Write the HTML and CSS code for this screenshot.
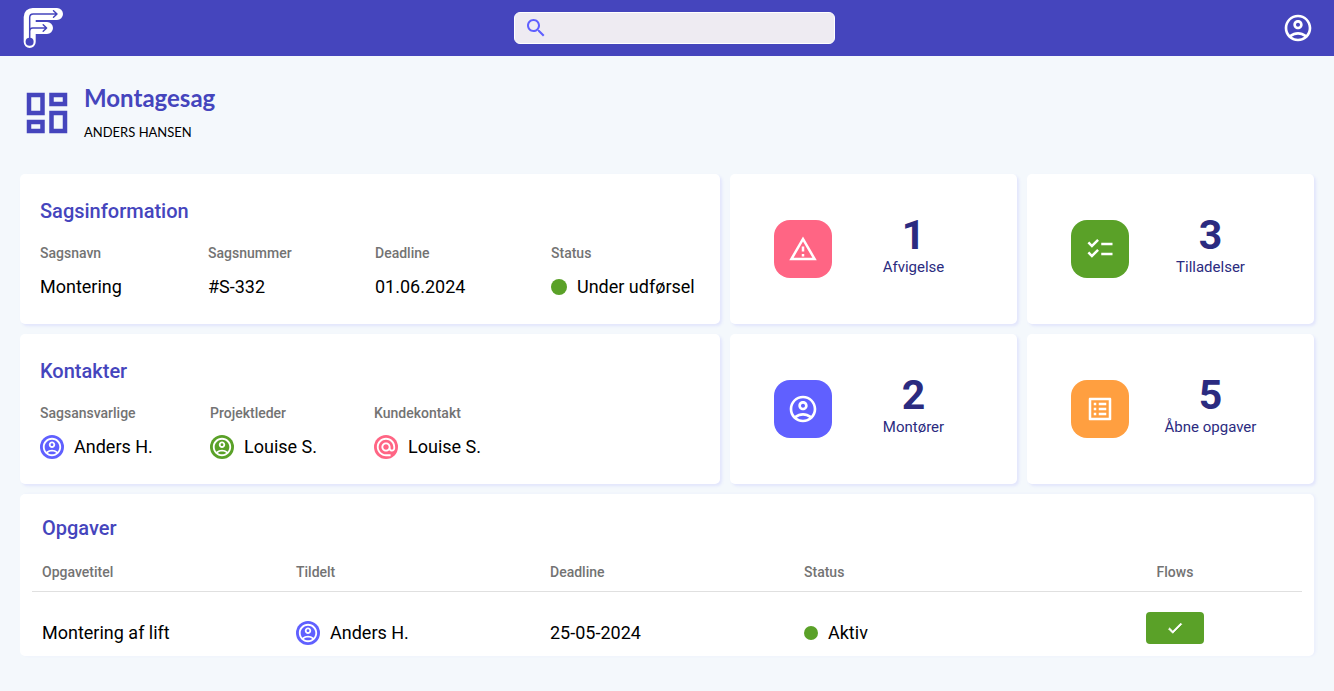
FILE: index.html
```html
<!DOCTYPE html>
<html lang="da">
<head>
<meta charset="utf-8">
<meta name="viewport" content="width=device-width, initial-scale=1">
<title>Montagesag</title>
<link rel="stylesheet" href="styles.css">
</head>
<body>
<svg class="sprite" aria-hidden="true">
  <symbol id="account" viewBox="0 0 24 24"><path d="M12 2C6.48 2 2 6.48 2 12s4.48 10 10 10 10-4.48 10-10S17.52 2 12 2zM7.35 18.5C8.66 17.56 10.26 17 12 17s3.34.56 4.65 1.5C15.34 19.44 13.74 20 12 20s-3.34-.56-4.65-1.5zm10.79-1.38C16.45 15.8 14.32 15 12 15s-4.45.8-6.14 2.12C4.7 15.73 4 13.95 4 12c0-4.42 3.58-8 8-8s8 3.58 8 8c0 1.95-.7 3.73-1.86 5.12zM12 6c-1.93 0-3.5 1.57-3.5 3.5S10.07 13 12 13s3.5-1.57 3.5-3.5S13.93 6 12 6zm0 5c-.83 0-1.5-.67-1.5-1.5S11.17 8 12 8s1.5.67 1.5 1.5S12.83 11 12 11z"/></symbol>
  <symbol id="email" viewBox="0 0 24 24"><path d="M12 2C6.48 2 2 6.48 2 12s4.48 10 10 10h5v-2h-5c-4.34 0-8-3.66-8-8s3.66-8 8-8 8 3.66 8 8v1.43c0 .79-.71 1.57-1.5 1.57s-1.5-.78-1.5-1.57V12c0-2.76-2.24-5-5-5s-5 2.24-5 5 2.24 5 5 5c1.38 0 2.64-.56 3.54-1.47.65.89 1.77 1.47 2.96 1.47 1.97 0 3.5-1.6 3.5-3.57V12c0-5.52-4.48-10-10-10zm0 13c-1.66 0-3-1.34-3-3s1.34-3 3-3 3 1.34 3 3-1.34 3-3 3z"/></symbol>
</svg>

<header class="topbar">
  <a class="logo" href="#" aria-label="Forside">
    <svg viewBox="20 4 47 48" fill="none" stroke-linecap="round" stroke-linejoin="round">
      <path class="logo-body" d="M29.7 42V17q0-3 3-3H57M30 28h17"/>
      <path class="logo-line" d="M29.7 42V17.5q0-3.5 3.500-3.500H57M29.7 31q0-3 3-3H46.500M53.500 10.700 57 14l-3.500 3.300M43.200 24.700l3.400 3.300-3.400 3.300"/>
      <circle class="logo-node" cx="29.6" cy="41.8" r="4"/>
    </svg>
  </a>
  <label class="search">
    <svg viewBox="0 0 24 24" aria-hidden="true"><path d="M15.500 14h-.79l-.28-.27C15.410 12.590 16 11.110 16 9.500 16 5.910 13.090 3 9.500 3S3 5.910 3 9.500 5.910 16 9.500 16c1.610 0 3.090-.59 4.230-1.570l.27.28v.79l5 4.990L20.490 19l-4.990-5zm-6 0C7.010 14 5 11.990 5 9.500S7.010 5 9.500 5 14 7.010 14 9.500 11.990 14 9.500 14z"/></svg>
    <input type="search" aria-label="Søg">
  </label>
  <button class="profile" type="button" aria-label="Profil"><svg><use href="#account"/></svg></button>
</header>

<main class="page">
  <div class="heading">
    <svg class="heading-icon" viewBox="0 0 24 24" aria-hidden="true"><path d="M19 5v2h-4V5h4M9 5v6H5V5h4m10 8v6h-4v-6h4M9 17v2H5v-2h4M21 3h-8v6h8V3zM11 3H3v10h8V3zm10 8h-8v10h8V11zm-10 4H3v6h8v-6z"/></svg>
    <div>
      <h1 class="heading-title">Montagesag</h1>
      <p class="heading-sub">ANDERS HANSEN</p>
    </div>
  </div>

  <div class="cards">
    <section class="card info">
      <h2 class="card-title">Sagsinformation</h2>
      <dl class="fields case-fields">
        <div><dt>Sagsnavn</dt><dd>Montering</dd></div>
        <div><dt>Sagsnummer</dt><dd>#S-332</dd></div>
        <div><dt>Deadline</dt><dd>01.06.2024</dd></div>
        <div><dt>Status</dt><dd><span class="dot"></span>Under udførsel</dd></div>
      </dl>
    </section>
    <section class="card stat">
      <span class="tile pink"><svg viewBox="0 0 24 24"><path d="M12 5.990 19.530 19H4.470L12 5.990M12 2 1 21h22L12 2zm1 14h-2v2h2v-2zm0-6h-2v4h2v-4z"/></svg></span>
      <p class="stat-text"><strong>1</strong>Afvigelse</p>
    </section>
    <section class="card stat">
      <span class="tile green"><svg viewBox="0 0 24 24"><path d="M22 7h-9v2h9V7zm0 8h-9v2h9v-2zM5.540 11 2 7.460l1.410-1.410 2.120 2.120 4.240-4.240 1.410 1.410L5.540 11zm0 8L2 15.460l1.410-1.410 2.120 2.120 4.240-4.240 1.410 1.410L5.540 19z"/></svg></span>
      <p class="stat-text"><strong>3</strong>Tilladelser</p>
    </section>

    <section class="card info">
      <h2 class="card-title">Kontakter</h2>
      <dl class="fields contact-fields">
        <div><dt>Sagsansvarlige</dt><dd><span class="avatar violet"><svg><use href="#account"/></svg></span>Anders H.</dd></div>
        <div><dt>Projektleder</dt><dd><span class="avatar green"><svg><use href="#account"/></svg></span>Louise S.</dd></div>
        <div><dt>Kundekontakt</dt><dd><span class="avatar pink"><svg><use href="#email"/></svg></span>Louise S.</dd></div>
      </dl>
    </section>
    <section class="card stat">
      <span class="tile violet"><svg class="large"><use href="#account"/></svg></span>
      <p class="stat-text"><strong>2</strong>Montører</p>
    </section>
    <section class="card stat">
      <span class="tile orange"><svg viewBox="0 0 24 24"><path d="M19 5v14H5V5h14m1.100-2H3.900c-.5 0-.9.4-.9.9v16.200c0 .4.4.9.9.9h16.200c.4 0 .9-.5.9-.9V3.900c0-.5-.5-.9-.9-.9zM11 7h6v2h-6V7zm0 4h6v2h-6v-2zm0 4h6v2h-6zM7 7h2v2H7zm0 4h2v2H7zm0 4h2v2H7z"/></svg></span>
      <p class="stat-text"><strong>5</strong>Åbne opgaver</p>
    </section>

    <section class="card tasks">
      <h2 class="card-title" id="tasks-title">Opgaver</h2>
      <table class="task-table" aria-labelledby="tasks-title">
        <thead>
          <tr><th>Opgavetitel</th><th>Tildelt</th><th>Deadline</th><th>Status</th><th class="flow">Flows</th></tr>
        </thead>
        <tbody>
          <tr>
            <td>Montering af lift</td>
            <td><span class="entry"><span class="avatar violet"><svg><use href="#account"/></svg></span>Anders H.</span></td>
            <td>25-05-2024</td>
            <td><span class="entry"><span class="dot small"></span>Aktiv</span></td>
            <td class="flow"><button class="flow-button" type="button" aria-label="Godkend"><svg viewBox="0 0 24 24"><path d="M9 16.170 4.830 12l-1.420 1.410L9 19 21 7l-1.410-1.410z"/></svg></button></td>
          </tr>
        </tbody>
      </table>
    </section>
  </div>
</main>
</body>
</html>
```

FILE: styles.css
```css
* { box-sizing: border-box; }

body {
  margin: 0;
  background: #f4f8fc;
  color: #000;
  font-family: Roboto, "Liberation Sans", sans-serif;
  font-size: 18px;
}

h1, h2, p, dl, dd { margin: 0; }
svg { display: block; fill: currentColor; }
.sprite { display: none; }

.topbar {
  display: flex;
  align-items: center;
  justify-content: space-between;
  height: 56px;
  padding: 0 20px;
  background: #4545bd;
  color: #fff;
}
.logo svg { width: 47px; height: 48px; fill: none; }
.logo-body { stroke: #fff; stroke-width: 12; }
.logo-line { stroke: #4545bd; stroke-width: 1.5; }
.logo-node { fill: #4545bd; }

.search {
  display: flex;
  align-items: center;
  gap: 8px;
  width: 321px;
  height: 32px;
  padding: 0 9px;
  border: 1px solid #fff;
  border-radius: 6px;
  background: #eeebf2;
  color: #6060ff;
}
.search svg { flex: none; width: 24px; height: 24px; }
.search input {
  flex: 1;
  min-width: 0;
  border: 0;
  outline: 0;
  background: transparent;
  font: inherit;
  font-size: 16px;
}

.profile { padding: 0; border: 0; background: none; color: inherit; cursor: pointer; }
.profile svg { width: 32px; height: 32px; }

.page { padding: 28px 20px 34px; }

.heading {
  display: flex;
  align-items: center;
  gap: 10px;
  margin-bottom: 32px;
  font-family: Lato, "Liberation Sans", sans-serif;
}
.heading-icon { width: 54px; height: 54px; color: #4545bd; }
.heading-title { color: #4545bd; font-size: 24px; line-height: 28px; font-weight: 700; }
.heading-sub { margin-top: 10px; font-size: 13px; line-height: 20px; }

.cards {
  display: grid;
  grid-template-columns: 700fr 287fr 287fr;
  gap: 10px;
}
.card {
  border-radius: 5px;
  background: #fff;
  box-shadow: 2px 2px 3px rgba(96, 96, 255, 0.12);
}
.card-title { color: #4545bd; font-size: 20px; line-height: 24px; font-weight: 500; }

.info { min-height: 150px; padding: 25px 20px; }
.fields { display: grid; margin-top: 20px; }
.case-fields { grid-template-columns: 168fr 167fr 176fr 149fr; }
.contact-fields { grid-template-columns: 170fr 164fr 326fr; }
dt, th { color: #737373; font-size: 14px; line-height: 20px; font-weight: 500; }
dd {
  display: flex;
  align-items: center;
  gap: 10px;
  margin-top: 12px;
  line-height: 24px;
  white-space: nowrap;
}

.dot { flex: none; width: 16px; height: 16px; border-radius: 50%; background: #5aa128; }
.dot.small { width: 14px; height: 14px; }

.avatar {
  display: grid;
  flex: none;
  place-items: center;
  width: 24px;
  height: 24px;
  border-radius: 50%;
  color: #fff;
}
.avatar svg { width: 22px; height: 22px; }

.stat { display: flex; align-items: center; justify-content: center; gap: 22px; }
.tile {
  display: grid;
  flex: none;
  place-items: center;
  width: 58px;
  height: 58px;
  border-radius: 16px;
  color: #fff;
}
.tile svg { width: 30px; height: 30px; }
.tile .large { width: 32px; height: 32px; }
.stat-text { width: 120px; padding-bottom: 8px; color: #2b2b80; font-size: 15px; line-height: 20px; text-align: center; }
.stat-text strong { display: block; font-size: 41px; line-height: 44px; font-weight: 700; }

.pink { background: #ff6584; }
.green { background: #5aa128; }
.violet { background: #6060ff; }
.orange { background: #ff9f40; }

.tasks { grid-column: 1 / -1; padding: 22px 12px 0; box-shadow: 2px 0 3px rgba(96, 96, 255, 0.06); }
.tasks .card-title { padding-left: 10px; }
.task-table { width: 100%; margin-top: 22px; border-collapse: separate; border-spacing: 0; table-layout: fixed; }
th { padding: 0 10px 9px; border-bottom: 1px solid #e0e0e0; text-align: left; }
td { padding: 0 10px 11px; line-height: 24px; vertical-align: bottom; }
.entry { display: flex; align-items: center; gap: 10px; }
.flow { text-align: center; }
td.flow { padding: 20px 10px 12px; }
.flow-button {
  display: grid;
  place-items: center;
  width: 58px;
  height: 32px;
  margin: 0 auto;
  padding: 0;
  border: 0;
  border-radius: 4px;
  background: #5aa128;
  color: #fff;
  cursor: pointer;
}
.flow-button svg { width: 18px; height: 18px; stroke: currentColor; stroke-width: 1; }
```
